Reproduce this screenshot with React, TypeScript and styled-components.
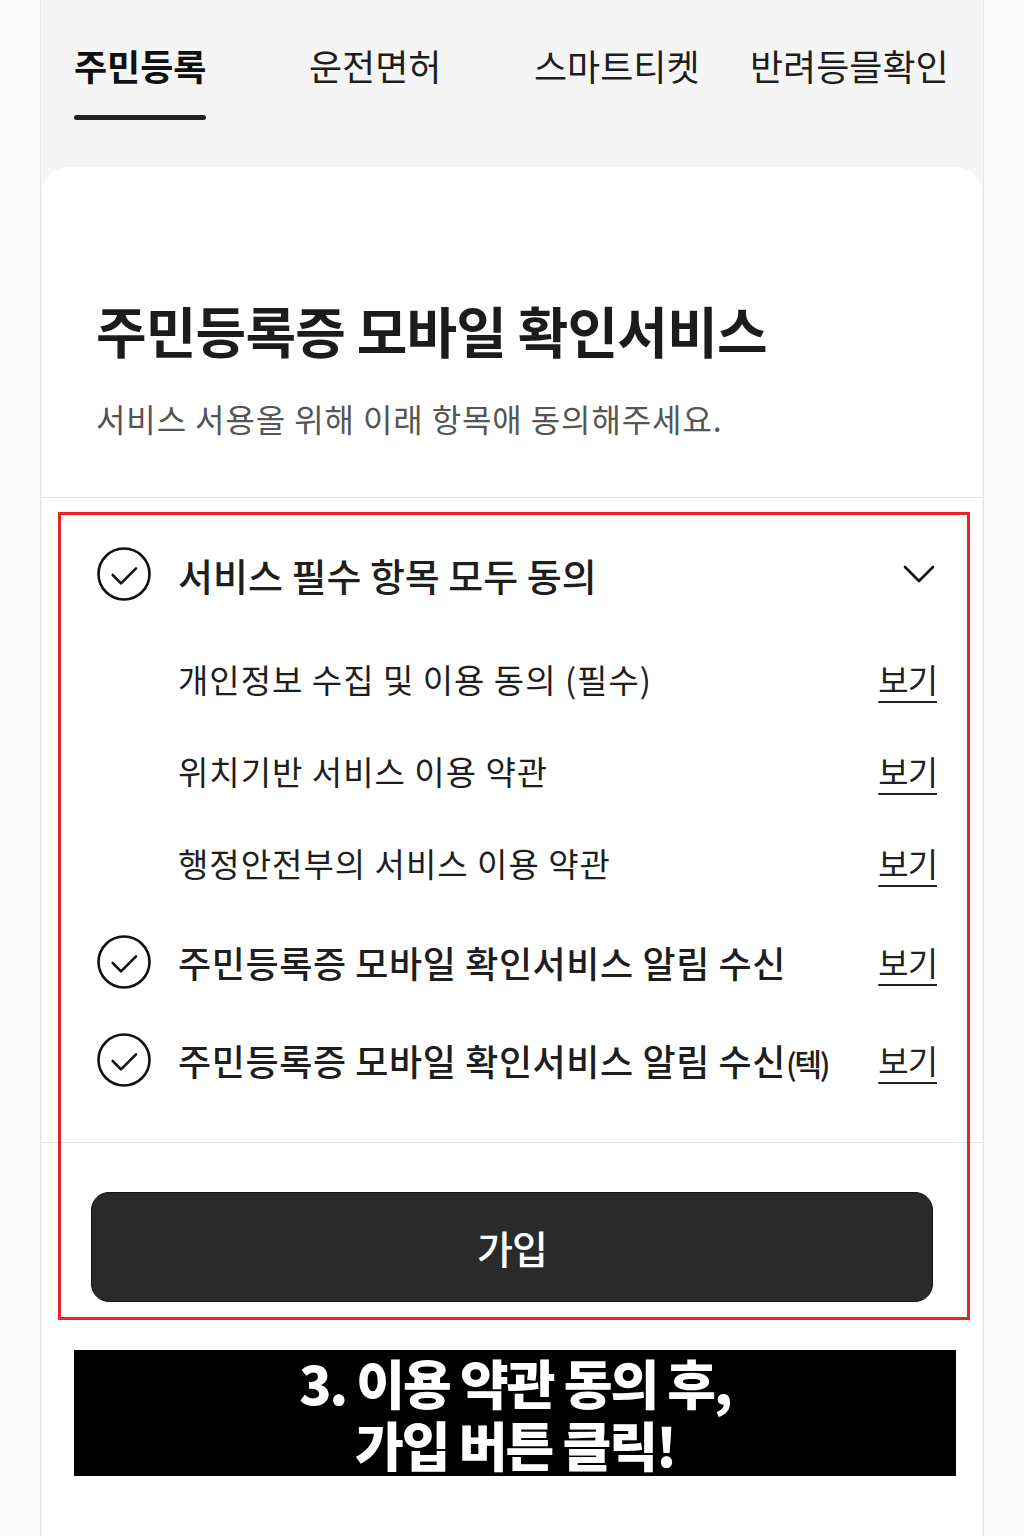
import React from 'react';
import styled, { createGlobalStyle } from 'styled-components';

const GlobalStyle = createGlobalStyle`
  html, body {
    margin: 0;
    padding: 0;
    background: #fafafa;
    font-family: "Noto Sans CJK KR", "Noto Sans", sans-serif;
    color: #222;
  }
`;

const Column = styled.div`
  width: 942px;
  min-height: 1536px;
  margin: 0 auto;
  border-left: 1px solid #e4e4e4;
  border-right: 1px solid #e4e4e4;
  background: #f5f5f5;
  display: flex;
  flex-direction: column;
`;

const TabBar = styled.nav`
  display: grid;
  grid-template-columns: 235px 225px 216px auto;
  padding: 43px 0 0 33px;
  height: 167px;
  box-sizing: border-box;
`;

const Tab = styled.div<{ $active?: boolean }>`
  display: inline-flex;
  flex-direction: column;
  align-items: flex-start;
  justify-self: start;
  font-size: 36px;
  line-height: 44px;
  letter-spacing: 0;
  font-weight: ${(p) => (p.$active ? 700 : 400)};
  color: ${(p) => (p.$active ? '#111' : '#1e1e1e')};

  &::after {
    content: '';
    display: ${(p) => (p.$active ? 'block' : 'none')};
    align-self: stretch;
    height: 5px;
    margin-top: 28px;
    border-radius: 3px;
    background: #222;
  }
`;

const Card = styled.main`
  position: relative;
  flex: 1;
  margin: 0 1px;
  background: #fff;
  border-radius: 26px 26px 0 0;
`;

const Header = styled.header`
  padding: 126px 40px 56px 54px;
  border-bottom: 1px solid #e6e6e6;
`;

const Title = styled.h1`
  margin: 0;
  font-size: 55px;
  line-height: 72px;
  font-weight: 700;
  letter-spacing: -0.8px;
  color: #1c1c1c;
`;

const Subtitle = styled.p`
  margin: 30px 0 0;
  font-size: 32px;
  line-height: 46px;
  font-weight: 400;
  color: #555;
  letter-spacing: 0.9px;
`;

const Agreements = styled.section`
  position: relative;
  padding: 26px 45px 33px 55px;
  border-bottom: 1px solid #e6e6e6;
`;

const Row = styled.div<{ $height: number }>`
  display: flex;
  align-items: center;
  height: ${(p) => p.$height}px;
`;

const SubList = styled.div`
  margin: 9px 0 4px;
`;

const CheckBox = styled.span`
  display: flex;
  flex: none;
  width: 54px;
  height: 54px;
  margin-right: 27px;
`;

const Label = styled.span<{ $indent?: boolean; $size: number; $weight: number; $spacing: number }>`
  flex: 1;
  padding-left: ${(p) => (p.$indent ? '81px' : '0')};
  font-size: ${(p) => p.$size}px;
  font-weight: ${(p) => p.$weight};
  letter-spacing: ${(p) => p.$spacing}px;
  color: #1e1e1e;
  white-space: nowrap;
`;

const Small = styled.span`
  font-size: 0.84em;
  letter-spacing: -2.5px;
`;

const ViewLink = styled.a`
  flex: none;
  font-size: 33px;
  color: #222;
  text-decoration: underline;
  text-decoration-thickness: 2px;
  text-underline-offset: 8px;
  letter-spacing: -1px;
`;

const Chevron = styled.span`
  display: flex;
  margin-right: 2px;
`;

const Footer = styled.div`
  position: relative;
  padding: 49px 49px 0;
`;

const JoinButton = styled.button`
  display: block;
  width: 100%;
  height: 110px;
  border: 1px solid #111;
  border-radius: 18px;
  background: #2a2a2a;
  color: #fff;
  font-family: inherit;
  font-size: 39px;
  font-weight: 500;
  letter-spacing: -1px;
  cursor: pointer;
`;

const Highlight = styled.div`
  position: absolute;
  left: 16px;
  top: 345px;
  width: 906px;
  height: 802px;
  border: 3px solid #e8232b;
  pointer-events: none;
`;

const Caption = styled.div`
  width: 882px;
  height: 126px;
  margin: 48px 0 0 32px;
  background: #000;
  color: #fff;
  display: flex;
  flex-direction: column;
  align-items: center;
  justify-content: center;
  font-size: 53px;
  line-height: 62px;
  font-weight: 900;
  letter-spacing: -2px;
`;

const CaptionLine = styled.span`
  display: block;
  height: 62px;
`;

const CheckCircle = () => (
  <CheckBox>
    <svg width="54" height="54" viewBox="0 0 54 54" fill="none">
      <circle cx="27" cy="27" r="25.5" stroke="#111" strokeWidth="2.6" />
      <path d="M15.7 28L24 36.3L39 21.3" stroke="#111" strokeWidth="2.6" strokeLinecap="round" strokeLinejoin="round" />
    </svg>
  </CheckBox>
);

const subItems = ['개인정보 수집 및 이용 동의 (필수)', '위치기반 서비스 이용 약관', '행정안전부의 서비스 이용 약관'];

export default function App() {
  return (
    <>
      <GlobalStyle />
      <Column>
        <TabBar>
          <Tab $active>주민등록</Tab>
          <Tab>운전면허</Tab>
          <Tab>스마트티켓</Tab>
          <Tab>반려등믈확인</Tab>
        </TabBar>
        <Card>
          <Header>
            <Title>주민등록증 모바일 확인서비스</Title>
            <Subtitle>서비스 서용올 위해 이래 항목애 동의해주세요.</Subtitle>
          </Header>
          <Agreements>
            <Row $height={100}>
              <CheckCircle />
              <Label $size={38} $weight={500} $spacing={0}>서비스 필수 항목 모두 동의</Label>
              <Chevron>
                <svg width="32" height="18" viewBox="0 0 32 18" fill="none">
                  <path d="M2 2L16 16L30 2" stroke="#111" strokeWidth="2.6" strokeLinecap="round" strokeLinejoin="round" />
                </svg>
              </Chevron>
            </Row>
            <SubList>
              {subItems.map((t) => (
                <Row $height={92} key={t}>
                  <Label $indent $size={33} $weight={400} $spacing={1}>{t}</Label>
                  <ViewLink>보기</ViewLink>
                </Row>
              ))}
            </SubList>
            <Row $height={98}>
              <CheckCircle />
              <Label $size={36} $weight={500} $spacing={0.6}>주민등록증 모바일 확인서비스 알림 수신</Label>
              <ViewLink>보기</ViewLink>
            </Row>
            <Row $height={98}>
              <CheckCircle />
              <Label $size={36} $weight={500} $spacing={0.6}>
                주민등록증 모바일 확인서비스 알림 수신<Small>(텍)</Small>
              </Label>
              <ViewLink>보기</ViewLink>
            </Row>
          </Agreements>
          <Footer>
            <JoinButton>가입</JoinButton>
          </Footer>
          <Caption>
            <CaptionLine>3. 이용 약관 동의 후,</CaptionLine>
            <CaptionLine>가입 버튼 클릭!</CaptionLine>
          </Caption>
          <Highlight />
        </Card>
      </Column>
    </>
  );
}
